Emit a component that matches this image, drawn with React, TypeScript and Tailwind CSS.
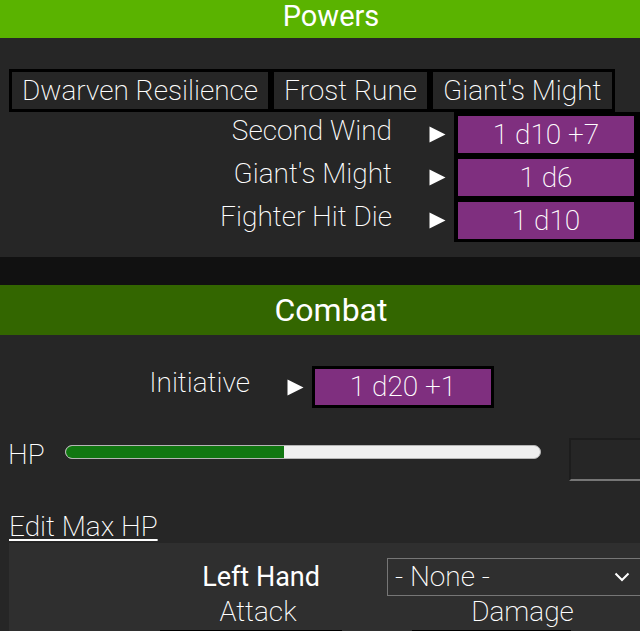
import React from "react";

const powers = [
  {name: "Second Wind", roll: "1 d10 +7"},
  {name: "Giant's Might", roll: "1 d6"},
  {name: "Fighter Hit Die", roll: "1 d10"},
];

const tabs = ["Dwarven Resilience", "Frost Rune", "Giant's Might"];

function Arrow() {
  return (
    <svg width="17" height="17" viewBox="0 0 17 17" className="block">
      <polygon points="0.5,0.5 16.5,8.5 0.5,16.5" fill="#ffffff" />
    </svg>
  );
}

export default function App() {
  return (
    <div className="h-[631px] w-[640px] overflow-hidden bg-[#262626] font-['Roboto',sans-serif] text-white">
      <div className="w-[662px]">
        {/* Powers */}
        <div className="h-[38px] bg-[#5ab300] text-center text-[29px] leading-[32px]">
          Powers
        </div>
        <div className="bg-[#262626] pt-[31px] pb-[15px] text-[28px] leading-[32px] font-extralight">
          <div className="pl-[9px]">
            <div className="inline-flex gap-[6px] bg-black p-[3px]">
              {tabs.map((t) => (
                <div
                  key={t}
                  className="flex h-[37px] items-center bg-[#262626] px-[10px]"
                >
                  {t}
                </div>
              ))}
            </div>
          </div>

          <div className="flex">
            <div className="flex w-[392px] shrink-0 flex-col items-end gap-[6px] pt-[4px]">
              {powers.map((p) => (
                <div key={p.name} className="flex h-[37px] items-center pb-[8px]">
                  {p.name}
                </div>
              ))}
            </div>
            <div className="ml-[37px] flex shrink-0 flex-col gap-[6px] pt-[4px]">
              {powers.map((p) => (
                <div key={p.name} className="flex h-[37px] items-center">
                  <Arrow />
                </div>
              ))}
            </div>
            <div className="ml-[8px] flex shrink-0 flex-col gap-[6px] bg-black pt-[4px] pr-[8px] pb-[3px] pl-[4px]">
              {powers.map((p) => (
                <div
                  key={p.name}
                  className="flex h-[37px] w-[176px] items-center justify-center bg-[#7f2f7f]"
                >
                  {p.roll}
                </div>
              ))}
            </div>
          </div>
        </div>

        <div className="h-[28px] bg-[#111111]" />

        {/* Combat */}
        <div className="h-[50px] bg-[#336600] text-center text-[32px] leading-[50px]">
          Combat
        </div>
        <div className="bg-[#262626] pt-[31px] text-[28px] leading-[32px] font-extralight">
          <div className="flex items-center">
            <div className="w-[250px] shrink-0 pb-[8px] text-right">Initiative</div>
            <div className="ml-[37px] shrink-0">
              <Arrow />
            </div>
            <div className="ml-[8px] flex h-[42px] w-[182px] shrink-0 items-center justify-center border-[3px] border-black bg-[#7f2f7f]">
              1 d20 +1
            </div>
          </div>

          <div className="mt-[30px] flex h-[43px] items-start">
            <div className="mt-[1px] w-[65px] shrink-0 pl-[8px]">HP</div>
            <div className="mt-[7px] flex h-[14px] w-[476px] shrink-0 overflow-hidden rounded-full border border-[#b5b5b5] bg-[#efefef]">
              <div className="h-full w-[46%] bg-[#117711]" />
            </div>
            <div className="ml-[28px] h-[43px] w-[100px] shrink-0 border-2 border-t-[#1d1d1d] border-l-[#1d1d1d] border-r-[#767676] border-b-[#767676] bg-[#262626]" />
          </div>

          <div className="mt-[30px] pl-[9px]">
            <a className="underline decoration-2 underline-offset-[3px]">Edit Max HP</a>
          </div>

          <div className="ml-[9px] bg-[#2f2f2f] pt-[15px]">
            <div className="flex items-center">
              <div className="w-[311px] shrink-0 text-right text-[27px] font-normal">Left Hand</div>
              <div className="ml-[67px] flex h-[38px] w-[258px] shrink-0 items-center justify-between border border-[#767676] pr-[14px] pl-[7px]">
                <span>- None -</span>
                <svg width="16" height="10" viewBox="0 0 16 10" fill="none">
                  <path d="M1.5 1.5 L8 8 L14.5 1.5" stroke="#ffffff" strokeWidth="2" />
                </svg>
              </div>
            </div>
            <div className="flex pl-[151px]">
              <div className="flex w-[196px] shrink-0 flex-col items-center">
                <div>Attack</div>
                <div className="mt-[2px] h-[40px] w-[182px] self-start bg-black" />
              </div>
              <div className="ml-[56px] flex w-[221px] shrink-0 flex-col items-center">
                <div>Damage</div>
                <div className="mt-[2px] h-[40px] w-[159px] self-start bg-black" />
              </div>
            </div>
          </div>
        </div>
      </div>
    </div>
  );
}
